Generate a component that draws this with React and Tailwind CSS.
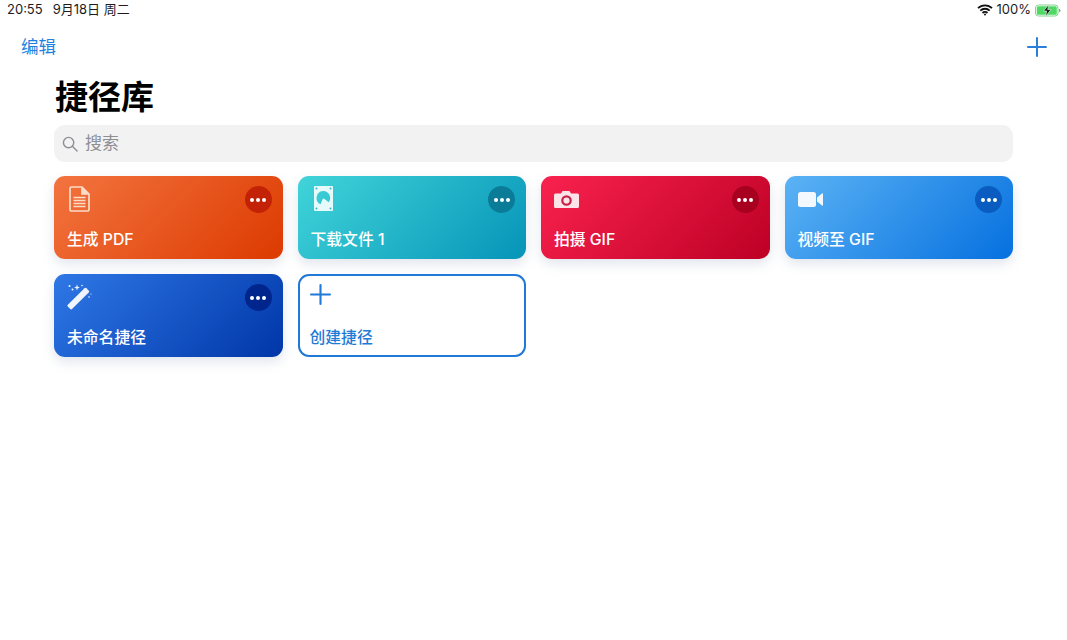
const font = { fontFamily: 'Inter, "Noto Sans CJK SC", sans-serif' }

function DocIcon() {
  return (
    <svg width="21" height="26" viewBox="0 0 21 26" fill="none" stroke="#fbdcc8" strokeWidth="1.700">
      <path d="M2.500 1h10.500l7 7v15.500a1.500 1.500 0 0 1-1.500 1.500h-16A1.500 1.500 0 0 1 1 23.500V2.500A1.500 1.500 0 0 1 2.500 1z" />
      <path d="M13 1.500V8h6.500" fill="#fbdcc8" />
      <path d="M4.500 11.500h12M4.500 14.500h12M4.500 17.500h12M4.500 20.500h12" strokeWidth="1.400" />
    </svg>
  )
}

function DiskIcon() {
  return (
    <svg width="19" height="25" viewBox="0 0 19 25">
      <path fillRule="evenodd" fill="#e6fafb" d="M1 0h17a1 1 0 0 1 1 1v23a1 1 0 0 1-1 1H1a1 1 0 0 1-1-1V1a1 1 0 0 1 1-1zM9.500 5a7 7 0 0 0-3 13.300l2.400-5.800 1.600 0.400 4.200 3.300A7 7 0 0 0 9.500 5z" />
      <circle cx="2.500" cy="2.500" r="1" fill="#2fb9c9" />
      <circle cx="16.500" cy="2.500" r="1" fill="#2fb9c9" />
      <circle cx="2.500" cy="22.500" r="1" fill="#2fb9c9" />
      <circle cx="16.500" cy="22.500" r="1" fill="#2fb9c9" />
    </svg>
  )
}

function CameraIcon() {
  return (
    <svg width="25" height="17" viewBox="0 0 25 17">
      <path fill="#fbe3e8" d="M1.500 2.500H7L8.500 0h7L17 2.500h6.500A1.500 1.500 0 0 1 25 4v11.500a1.500 1.500 0 0 1-1.500 1.500h-22A1.500 1.500 0 0 1 0 15.500V4a1.500 1.500 0 0 1 1.500-1.500z" />
      <circle cx="12.500" cy="9.500" r="4.200" fill="none" stroke="#c4224a" strokeWidth="2.200" />
    </svg>
  )
}

function VideoIcon() {
  return (
    <svg width="25" height="15" viewBox="0 0 25 15" fill="#f2f8fe">
      <rect x="0" y="0" width="18" height="15" rx="2.500" />
      <path d="M19 5.500 24 1.500a0.600 0.600 0 0 1 1 0.500v11a0.600 0.600 0 0 1-1 0.500L19 9.500z" />
    </svg>
  )
}

function WandIcon() {
  return (
    <svg width="26" height="26" viewBox="0 0 26 26" fill="#f0f5fd">
      <path d="M0.800 20.700 17.500 4.200a1.300 1.300 0 0 1 1.800 0l2.400 2.400a1.300 1.300 0 0 1 0 1.800L5 25a1.300 1.300 0 0 1-1.800 0L0.800 22.500a1.300 1.300 0 0 1 0-1.800z" />
      <path d="M10 0.500l0.800 2.200 2.200 0.800-2.200 0.800-0.800 2.200-0.800-2.200-2.200-0.800 2.200-0.800z" />
      <circle cx="2.500" cy="2" r="1" />
      <circle cx="5.500" cy="5.500" r="1" />
      <circle cx="15" cy="1.500" r="0.800" />
      <circle cx="22" cy="13" r="0.800" />
      <circle cx="24" cy="10" r="0.600" />
    </svg>
  )
}

function PlusIcon({ size, color, width = 2 }) {
  return (
    <svg width={size} height={size} viewBox="0 0 20 20" stroke={color} strokeWidth={width} strokeLinecap="round">
      <path d="M10 1v18M1 10h18" />
    </svg>
  )
}

function StatusBar() {
  return (
    <div className="h-[20px] flex items-center justify-between pl-[7px] pr-[6px] text-[13px] text-[#1c1c1e]">
      <div className="flex gap-[10px]">
        <span>20:55</span>
        <span>9月18日 周二</span>
      </div>
      <div className="flex items-center gap-[4px]">
        <svg width="16" height="12" viewBox="0 0 16 12" fill="none" stroke="#111" strokeWidth="1.800">
          <path d="M1 4.200a10 10 0 0 1 14 0M3.300 6.700a6.700 6.700 0 0 1 9.400 0M5.500 9a3.500 3.500 0 0 1 5 0" />
          <circle cx="8" cy="10.600" r="1" fill="#111" stroke="none" />
        </svg>
        <span>100%</span>
        <svg width="26" height="13" viewBox="0 0 26 13">
          <rect x="0.500" y="1" width="22.500" height="11" rx="3" fill="none" stroke="#7fd48b" />
          <rect x="1.800" y="2.300" width="20" height="8.400" rx="1.500" fill="#4fd964" />
          <path d="M24 4.700c1 0.300 1.500 1 1.500 1.800s-0.500 1.500-1.500 1.800z" fill="#9a9a9a" />
          <path d="M13.800 0.600 8.500 7h3.200l-1.200 5.400 5.500-6.800h-3.300z" fill="#111" stroke="#d8f5dc" strokeWidth="0.700" />
        </svg>
      </div>
    </div>
  )
}

function Card({ title, icon, from, to, dot, iconClass }) {
  return (
    <div
      className="h-[83px] rounded-[11px] pl-[13px] pr-[11px] flex flex-col justify-between shadow-[0_5px_12px_rgba(90,110,150,0.18)]"
      style={{ backgroundImage: `linear-gradient(135deg, ${from}, ${to})` }}
    >
      <div className="flex justify-between items-start">
        <div className={iconClass}>{icon}</div>
        <div
          className="mt-[10px] w-[27px] h-[27px] rounded-full flex items-center justify-center gap-[2px]"
          style={{ backgroundColor: dot }}
        >
          <span className="w-[4px] h-[4px] rounded-full bg-white" />
          <span className="w-[4px] h-[4px] rounded-full bg-white" />
          <span className="w-[4px] h-[4px] rounded-full bg-white" />
        </div>
      </div>
      <div className="text-white text-[15.800px] leading-[22px] font-medium mb-[8px]">{title}</div>
    </div>
  )
}

const cards = [
  { title: '生成 PDF', from: '#f3743f', to: '#dc3a00', dot: '#c42206', icon: <DocIcon />, iconClass: 'mt-[10px] ml-[2px]' },
  { title: '下载文件 1', from: '#41d4d9', to: '#0694b8', dot: '#0a7c97', icon: <DiskIcon />, iconClass: 'mt-[10px] ml-[3px]' },
  { title: '拍摄 GIF', from: '#f9224f', to: '#bd0025', dot: '#a8001f', icon: <CameraIcon />, iconClass: 'mt-[15px]' },
  { title: '视频至 GIF', from: '#5cb3f5', to: '#0570df', dot: '#0a5cc0', icon: <VideoIcon />, iconClass: 'mt-[16px]' },
  { title: '未命名捷径', from: '#2f78e6', to: '#0036a8', dot: '#00258c', icon: <WandIcon />, iconClass: 'mt-[10px]' },
]

export default function App() {
  return (
    <div className="h-[640px] bg-white overflow-hidden" style={font}>
      <StatusBar />
      <div className="h-[54px] flex items-center justify-between pl-[21px] pr-[20px]">
        <span className="text-[17.500px] text-[#1e83e0]">编辑</span>
        <PlusIcon size={20} color="#2a80d8" />
      </div>
      <div className="px-[54px]">
        <h1 className="text-[33px] leading-[46px] font-bold text-black mb-[5px] pl-[1px]">捷径库</h1>
        <div className="h-[37px] rounded-[11px] bg-[#f2f2f3] flex items-center pl-[8px] gap-[7px] text-[17px] text-[#8e8e93]">
          <svg width="16" height="16" viewBox="0 0 17 17" fill="none" stroke="#8e8e93" strokeWidth="1.500" strokeLinecap="round">
            <circle cx="7" cy="7" r="5.500" />
            <path d="M11 11l5 5" />
          </svg>
          <span>搜索</span>
        </div>
        <div className="grid grid-cols-4 gap-[15px] mt-[14px]">
          {cards.map((c) => (
            <Card key={c.title} {...c} />
          ))}
          <div className="h-[83px] rounded-[11px] border-2 border-[#2079d6] pl-[10px] flex flex-col justify-between">
            <div className="mt-[8px]">
              <PlusIcon size={21} color="#2079d6" />
            </div>
            <div className="text-[#1e7bd6] text-[15.800px] leading-[22px] font-medium mb-[6px]">创建捷径</div>
          </div>
        </div>
      </div>
    </div>
  )
}
